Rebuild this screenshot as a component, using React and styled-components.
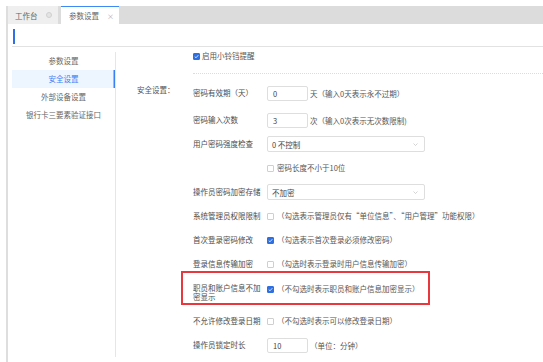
import React from "react";
import styled, { createGlobalStyle } from "styled-components";

const GlobalStyle = createGlobalStyle`
  html, body {
    margin: 0;
    padding: 0;
    background: #fff;
  }
  body {
    font-family: "Noto Sans CJK SC", "Noto Sans", sans-serif;
    font-size: 7.5px;
    color: #555;
  }
`;

const Frame = styled.div`
  margin: 6px 0 0 6px;
  height: 356px;
  border-left: 2px solid #dedede;
  overflow: hidden;
`;

const TabBar = styled.div`
  display: flex;
  height: 18px;
  background: #dcdcdc;
`;

const Tab = styled.div`
  display: flex;
  align-items: center;
  box-sizing: border-box;
  width: ${(p) => p.$width}px;
  margin-left: ${(p) => p.$gap || 0}px;
  padding-left: ${(p) => p.$pad}px;
  gap: ${(p) => p.$inner}px;
  background: ${(p) => (p.$active ? "#fff" : "#efefef")};
  border-top: ${(p) => (p.$active ? "1.5px solid #3d8af7" : "none")};
  color: #666;
`;

const TabDot = styled.span`
  width: 4px;
  height: 4px;
  border-radius: 50%;
  border: 1px solid #d0d0d0;
  background: #e4e4e4;
`;

const TabClose = styled.span`
  font-size: 7px;
  color: #aaa;
`;

const TitleRow = styled.div`
  display: flex;
  height: 23px;
  margin-left: 4px;
  padding: 5px 0 0 1px;
  box-sizing: border-box;
  border-bottom: 1px solid #e2e2e2;
`;

const TitleBar = styled.span`
  width: 1.5px;
  height: 15px;
  background: #2f6fe8;
`;

const Main = styled.div`
  display: flex;
  margin-left: 4px;
  height: 310px;
`;

const Menu = styled.ul`
  list-style: none;
  margin: 5px 0 0;
  padding: 0;
  width: 103px;
  flex-shrink: 0;
  border-right: 1px solid #e6e6e6;
`;

const MenuItem = styled.li`
  height: 18px;
  line-height: 18px;
  text-align: center;
  color: ${(p) => (p.$active ? "#3a80f5" : "#666")};
  background: ${(p) => (p.$active ? "#edf5ff" : "transparent")};
  box-shadow: ${(p) => (p.$active ? "inset -1.5px 0 0 #3a80f5" : "none")};
`;

const Content = styled.div`
  flex: 1;
  display: flex;
  flex-direction: column;
`;

const NotifyBlock = styled.div`
  margin-left: 77px;
  padding: 4px 0 12px;
  border-bottom: 1px dotted #dcdcdc;
`;

const Section = styled.div`
  display: flex;
`;

const SectionLabel = styled.div`
  width: 77px;
  box-sizing: border-box;
  padding: 8px 0 0 21px;
  line-height: 16px;
  color: #555;
`;

const Form = styled.div`
  display: flex;
  flex-direction: column;
  padding-top: 11px;
`;

const Row = styled.div`
  display: flex;
  align-items: center;
  height: 16px;
  margin-top: ${(p) => (p.$top === undefined ? 8 : p.$top)}px;
`;

const Label = styled.div`
  width: 74px;
  flex-shrink: 0;
  color: #4c4c4c;
  line-height: ${(p) => (p.$wrap ? "8.5px" : "16px")};
  align-self: ${(p) => (p.$wrap ? "flex-start" : "center")};
  margin-top: ${(p) => (p.$wrap ? 3 : 0)}px;
`;

const Input = styled.div`
  width: 41px;
  height: 15px;
  box-sizing: border-box;
  padding-left: 5px;
  border: 1px solid #dedede;
  border-radius: 2px;
  line-height: 13px;
  color: #444;
`;

const Select = styled.div`
  display: flex;
  align-items: center;
  justify-content: space-between;
  width: 158px;
  height: 16px;
  box-sizing: border-box;
  padding: 0 6px 0 4px;
  border: 1px solid #dedede;
  border-radius: 2px;
  color: #444;
`;

const Hint = styled.span`
  margin-left: 2px;
  color: #555;
  white-space: nowrap;
`;

const CheckWrap = styled.label`
  display: flex;
  align-items: center;
  gap: ${(p) => (p.$gap === undefined ? 3 : p.$gap)}px;
  color: #555;
  white-space: nowrap;
  line-height: 10px;
`;

const Box = styled.span`
  display: flex;
  align-items: center;
  justify-content: center;
  width: 7px;
  height: 7px;
  box-sizing: border-box;
  border-radius: 1px;
  border: 1px solid ${(p) => (p.$on ? "#2f6fe0" : "#cfcfcf")};
  background: ${(p) => (p.$on ? "#2f6fe0" : "#fff")};
`;

const Highlight = styled.div`
  width: 249px;
  box-sizing: border-box;
  margin: -1px 0 0 -12px;
  padding: 8px 0 6px 10px;
  border: 2px solid #e8383d;
`;

function Check({ on, children, gap }) {
  return (
    <CheckWrap $gap={gap}>
      <Box $on={on}>
        {on && (
          <svg width="5" height="5" viewBox="0 0 10 10">
            <path d="M1.5 5.2 L4 7.6 L8.6 2.4" fill="none" stroke="#fff" strokeWidth="1.6" />
          </svg>
        )}
      </Box>
      {children}
    </CheckWrap>
  );
}

function Chevron() {
  return (
    <svg width="5" height="3" viewBox="0 0 10 6">
      <path d="M1 1 L5 5 L9 1" fill="none" stroke="#aaa" strokeWidth="1" />
    </svg>
  );
}

const menu = ["参数设置", "安全设置", "外部设备设置", "银行卡三要素验证接口"];

export default function App() {
  return (
    <>
      <GlobalStyle />
      <Frame>
        <TabBar>
          <Tab $width={50} $pad={7} $inner={8}>
            工作台
            <TabDot />
          </Tab>
          <Tab $width={58} $gap={3} $pad={8} $inner={8} $active>
            参数设置
            <TabClose>×</TabClose>
          </Tab>
        </TabBar>
        <TitleRow>
          <TitleBar />
        </TitleRow>
        <Main>
          <Menu>
            {menu.map((m, i) => (
              <MenuItem key={m} $active={i === 1}>
                {m}
              </MenuItem>
            ))}
          </Menu>
          <Content>
            <NotifyBlock>
              <Check on gap={2}>启用小铃铛提醒</Check>
            </NotifyBlock>
            <Section>
              <SectionLabel>安全设置：</SectionLabel>
              <Form>
                <Row $top={0}>
                  <Label>密码有效期（天）</Label>
                  <Input>0</Input>
                  <Hint>天（输入0天表示永不过期）</Hint>
                </Row>
                <Row $top={11}>
                  <Label>密码输入次数</Label>
                  <Input>3</Input>
                  <Hint>次（输入0次表示无次数限制)</Hint>
                </Row>
                <Row>
                  <Label>用户密码强度检查</Label>
                  <Select>
                    0 不控制
                    <Chevron />
                  </Select>
                </Row>
                <Row>
                  <Label />
                  <Check>密码长度不小于10位</Check>
                </Row>
                <Row>
                  <Label>操作员密码加密存储</Label>
                  <Select>
                    不加密
                    <Chevron />
                  </Select>
                </Row>
                <Row>
                  <Label>系统管理员权限限制</Label>
                  <Check>（勾选表示管理员仅有“单位信息”、“用户管理”功能权限）</Check>
                </Row>
                <Row>
                  <Label>首次登录密码修改</Label>
                  <Check on>（勾选表示首次登录必须修改密码）</Check>
                </Row>
                <Row>
                  <Label>登录信息传输加密</Label>
                  <Check>（勾选时表示登录时用户信息传输加密）</Check>
                </Row>
                <Highlight>
                  <Row $top={0}>
                    <Label $wrap>职员和账户信息不加密显示</Label>
                    <Check on>（不勾选时表示职员和账户信息加密显示）</Check>
                  </Row>
                </Highlight>
                <Row>
                  <Label>不允许修改登录日期</Label>
                  <Check>（不勾选时表示可以修改登录日期）</Check>
                </Row>
                <Row>
                  <Label>操作员锁定时长</Label>
                  <Input>10</Input>
                  <Hint>（单位：分钟）</Hint>
                </Row>
              </Form>
            </Section>
          </Content>
        </Main>
      </Frame>
    </>
  );
}
